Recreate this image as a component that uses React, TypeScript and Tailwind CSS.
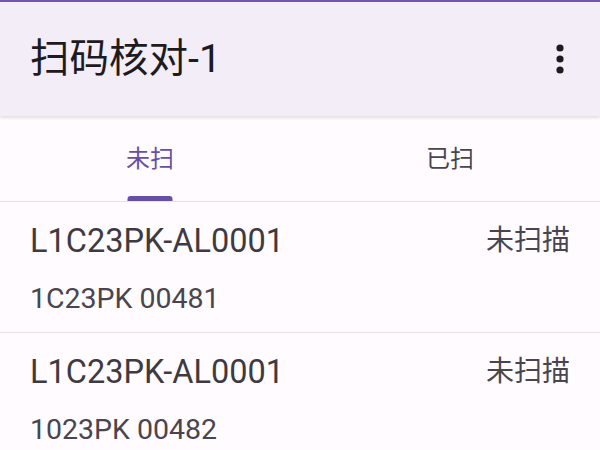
import React, { useState } from "react";

const font = { fontFamily: 'Roboto, "Noto Sans CJK SC", sans-serif' };

const items = [
  { code: "L1C23PK-AL0001", sub: "1C23PK 00481", status: "未扫描" },
  { code: "L1C23PK-AL0001", sub: "1023PK 00482", status: "未扫描" },
];

function MoreIcon() {
  return (
    <svg width="12" height="32" viewBox="0 0 12 32" className="fill-[#1d1b20]">
      <circle cx="6" cy="5" r="3.6" />
      <circle cx="6" cy="16" r="3.6" />
      <circle cx="6" cy="27" r="3.6" />
    </svg>
  );
}

export default function App() {
  const [tab, setTab] = useState(0);
  const tabs = ["未扫", "已扫"];

  return (
    <div className="h-[450px] w-[600px] overflow-hidden bg-[#fffbfe]" style={font}>
      <div className="h-[2px] bg-[#6f55b6]" />
      <header className="relative z-10 flex h-[114px] items-center justify-between bg-[#f3edf7] pl-[30px] pr-[34px] shadow-[0_2px_3px_rgba(0,0,0,0.12)]">
        <h1 className="text-[39.5px] leading-none text-[#1d1b20]">扫码核对-1</h1>
        <MoreIcon />
      </header>

      <nav className="flex h-[86px] border-b border-[#e7e0ec]">
        {tabs.map((t, i) => (
          <button
            key={t}
            onClick={() => setTab(i)}
            className="relative flex flex-1 items-center justify-center"
          >
            <span
              className={
                "text-[24px] leading-none " +
                (tab === i ? "text-[#6750a4]" : "text-[#49454f]")
              }
            >
              {t}
            </span>
            {tab === i && (
              <span className="absolute bottom-0 left-1/2 h-[5px] w-[45px] -translate-x-1/2 rounded-t-[3px] bg-[#6750a4]" />
            )}
          </button>
        ))}
      </nav>

      <ul>
        {items.map((it, i) => (
          <li
            key={i}
            className="border-b border-[#e7e0ec] pb-[15px] pl-[30px] pr-[30px] pt-[19px]"
          >
            <div className="flex h-[40px] items-center justify-between">
              <span className="text-[32.5px] leading-[40px] text-[#3d3a42]">{it.code}</span>
              <span className="text-[28px] leading-[40px] text-[#49454f]">{it.status}</span>
            </div>
            <div className="mt-[20px] text-[28.5px] leading-[36px] text-[#49454f]">{it.sub}</div>
          </li>
        ))}
      </ul>
    </div>
  );
}
